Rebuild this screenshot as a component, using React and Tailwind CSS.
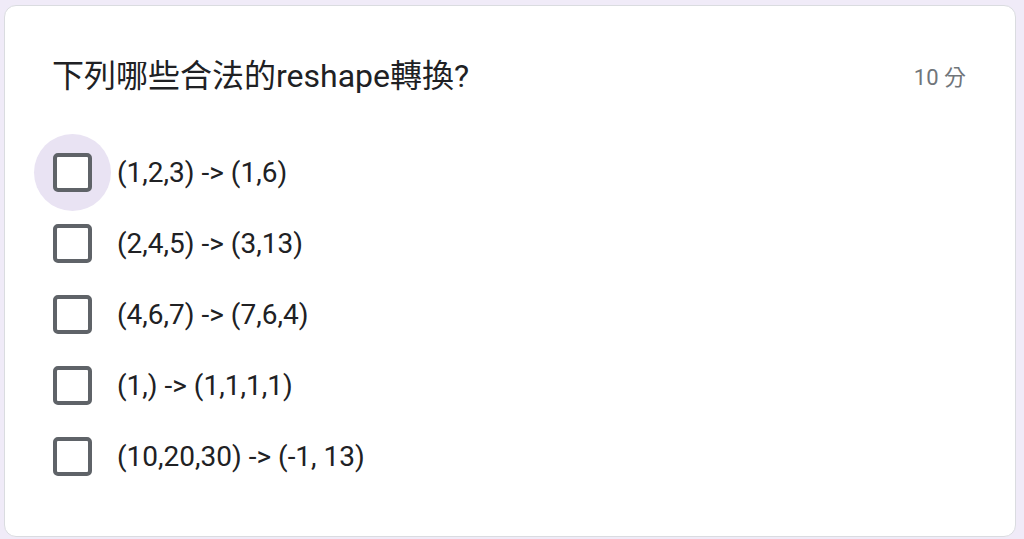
import React from "react";

const OPTIONS = [
  "(1,2,3) -> (1,6)",
  "(2,4,5) -> (3,13)",
  "(4,6,7) -> (7,6,4)",
  "(1,) -> (1,1,1,1)",
  "(10,20,30) -> (-1, 13)",
];

function Checkbox({ hover }) {
  return (
    <div className="relative w-[39px] h-[39px] shrink-0">
      {hover && (
        <div className="absolute left-[-19px] top-[-19px] w-[77px] h-[77px] rounded-full bg-[#e9e3f3]" />
      )}
      <div className="relative w-[39px] h-[39px] rounded-[5px] border-[4px] border-[#5f6368] bg-white" />
    </div>
  );
}

export default function App() {
  return (
    <div
      className="w-[1024px] h-[539px] bg-[#f0ebf8] pt-[5px] pl-[4px] overflow-hidden"
      style={{ fontFamily: "Roboto, 'Noto Sans CJK TC', sans-serif" }}
    >
      <div className="w-[1012px] h-[532px] bg-white rounded-[12px] border border-[#dadce0] pt-[50px] pl-[47px] pr-[49px]">
        <div className="flex items-start justify-between">
          <div className="text-[32px] leading-[40px] text-[#202124]">下列哪些合法的reshape轉換?</div>
          <div className="text-[22px] leading-[40px] text-[#70757a] pt-[2px]">10 分</div>
        </div>
        <div className="mt-[39px] flex flex-col">
          {OPTIONS.map((o, i) => (
            <div key={i} className="h-[71px] flex items-center pl-[1px]">
              <Checkbox hover={i === 0} />
              <div className="ml-[25px] text-[28px] leading-[36px] text-[#202124]">{o}</div>
            </div>
          ))}
        </div>
      </div>
    </div>
  );
}
